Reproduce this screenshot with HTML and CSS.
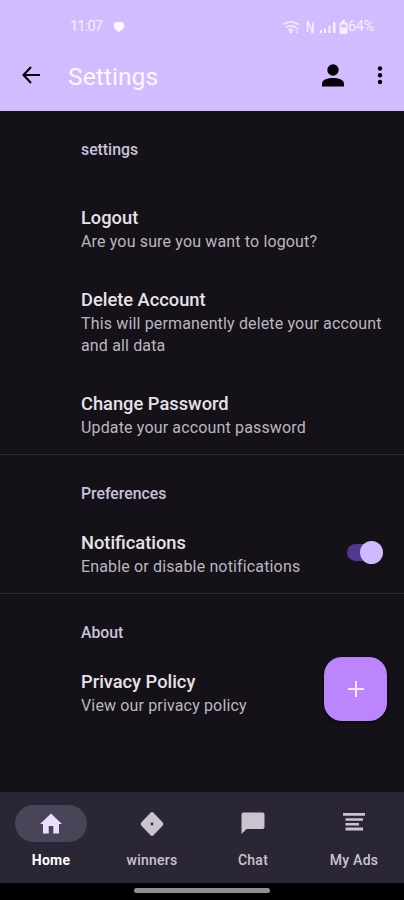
FILE: index.html
```
<!DOCTYPE html>
<html lang="en">
<head>
<meta charset="utf-8">
<title>Settings</title>
<link rel="stylesheet" href="styles.css">
</head>
<body>
<div class="screen">
  <header class="header">
    <div class="status">
      <span class="time">11:07</span>
      <svg class="bubble" width="12" height="12" viewBox="0 0 12 12"><path d="M3.500 1h5a3 3 0 0 1 2.800 3.500c0 2.500-1.500 4.500-4 5.500L5.500 11.300 4.500 10C2 9 .7 7 .7 4.500A3 3 0 0 1 3.500 1z"/></svg>
      <span class="spacer"></span>
      <svg class="signals" width="66" height="18" viewBox="0 0 66 18">
        <g fill="none" stroke="currentColor" stroke-width="1.700">
          <path d="M.5 6.500Q8 1 15.500 6.500M3 9.500Q8 6 13 9.500M5.500 12.500Q8 10.300 10 12.500"/>
          <path d="M24.500 14V4.500l5.500 9V4.500M23.500 4.500h3M27.500 14h3" stroke-width="1.500"/>
        </g>
        <circle cx="8" cy="14" r="1.300"/><path d="M13 10h2v2h-2zM13 13h2v2h-2z" opacity=".7"/>
        <path d="M37 12h2v3h-2zM41 10.500h2v4.500h-2zM45.500 8h2v7h-2zM50 4h2.500v11H50z"/>
        <path d="M59 2h3v2.500h2.500v11.500h-8V4.500H59zM58 6.500V9.500h5V6.500z" fill-rule="evenodd"/>
      </svg>
      <span class="percent">64%</span>
    </div>
    <div class="toolbar">
      <svg class="back" width="20" height="20" viewBox="0 0 20 20"><path d="M19 9H2.500M10 1L2.500 9l7.500 8" fill="none" stroke="currentColor" stroke-width="2.100"/></svg>
      <h1>Settings</h1>
      <svg class="person" width="24" height="24" viewBox="0 0 24 24"><circle cx="12" cy="6" r="5.700"/><path d="M1 22.500v-3c0-3.800 6-5.500 11-5.500s11 1.700 11 5.500v3z"/></svg>
      <svg class="more" width="6" height="20" viewBox="0 0 6 20"><circle cx="3" cy="2.500" r="2.200"/><circle cx="3" cy="9.300" r="2.200"/><circle cx="3" cy="16" r="2.200"/></svg>
    </div>
  </header>

  <main class="content">
    <section class="group first">
      <h2>settings</h2>
      <div class="item"><h3>Logout</h3><p>Are you sure you want to logout?</p></div>
      <div class="item"><h3>Delete Account</h3><p>This will permanently delete your account and all data</p></div>
      <div class="item"><h3>Change Password</h3><p>Update your account password</p></div>
    </section>
    <section class="group">
      <h2>Preferences</h2>
      <div class="item with-switch">
        <div><h3>Notifications</h3><p>Enable or disable notifications</p></div>
        <span class="switch"><span class="thumb"></span></span>
      </div>
    </section>
    <section class="group">
      <h2>About</h2>
      <div class="item"><h3>Privacy Policy</h3><p>View our privacy policy</p></div>
    </section>
    <button class="fab" aria-label="Add"><svg width="18" height="18" viewBox="0 0 18 18"><path d="M9 1v16M1 9h16" fill="none" stroke="currentColor" stroke-width="2"/></svg></button>
  </main>

  <nav class="nav">
    <a class="tab active"><span class="pill"><svg width="24" height="24" viewBox="0 0 24 24"><path d="M12 1.500L1 12h3v9.500h5.700V14h4.600v7.500H20V12h3z"/></svg></span><span class="label">Home</span></a>
    <a class="tab"><span class="pill"><svg width="26" height="26" viewBox="0 0 26 26"><path fill-rule="evenodd" d="M11.500 1.700q1.500-1.200 3 0l9.300 9.800q1.200 1.500 0 3l-9.300 9.800q-1.500 1.200-3 0l-9.300-9.800q-1.200-1.500 0-3zM13 11.600a1.400 1.400 0 1 0 0 2.800 1.400 1.400 0 0 0 0-2.800z"/></svg></span><span class="label">winners</span></a>
    <a class="tab"><span class="pill"><svg width="24" height="24" viewBox="0 0 24 24"><path d="M2.500 .5h19q2 0 2 2v12.500q0 2-2 2H5.500L.5 22V2.500q0-2 2-2z"/></svg></span><span class="label">Chat</span></a>
    <a class="tab"><span class="pill"><svg width="24" height="24" viewBox="0 0 24 24"><path d="M1 1h22v2.800H1zM3.500 6.300h17.500v2.500H3.500zM3.500 11h13.500v2.500H3.500zM3.500 15.500h17.500V18.500H3.500z"/></svg></span><span class="label">My Ads</span></a>
  </nav>
  <footer class="gesture"><span class="handle"></span></footer>
</div>
</body>
</html>
```
FILE: styles.css
```
* { box-sizing: border-box; }
body, h1, h2, h3, p { margin: 0; }
body { background: #141118; font-family: Roboto, "Liberation Sans", sans-serif; }
svg { display: block; flex: none; fill: currentColor; }

.screen { display: flex; flex-direction: column; width: 404px; height: 900px; overflow: hidden; }

.header { flex: none; height: 111px; background: #d1bcff; }
.status { display: flex; align-items: center; height: 36px; padding: 17px 30px 0 70px; color: #f7eeff; }
.time { font-size: 14.500px; line-height: 18px; width: 43px; letter-spacing: -0.800px; }
.bubble { color: #fff7ff; }
.spacer { flex: 1; }
.signals { margin-right: -1px; }
.percent { font-size: 14.500px; line-height: 18px; letter-spacing: -0.300px; }
.toolbar { display: flex; align-items: center; height: 79px; padding: 0 21px 0 21px; color: #050208; }
.toolbar h1 { flex: 1; margin: 3px 0 0 27px; color: #fff7ff; font-size: 24.700px; line-height: 30px; font-weight: 400; }
.more { margin-left: 32px; }

.content { position: relative; flex: 1; }
.group { border-bottom: 1px solid #2d2a32; height: 139px; }
.group.first { height: 344px; }
.group:nth-of-type(3) { border-bottom: 0; }
.group h2 { height: 58px; padding: 28px 0 0 81px; color: #cbc2db; font-size: 15.800px; line-height: 22px; font-weight: 500; }
.group.first h2 { height: 77px; padding-top: 28px; }
.item { padding: 18px 18px 18px 81px; }
.item h3 { color: #e8e1e9; font-size: 18.300px; line-height: 24px; font-weight: 500; }
.item p { position: relative; top: 1px; color: #bcb6bf; font-size: 16px; line-height: 22px; letter-spacing: 0.150px; }
.with-switch { display: flex; align-items: center; justify-content: space-between; padding-right: 21px; }
.switch { display: flex; align-items: center; justify-content: flex-end; width: 36px; height: 17px; margin-bottom: 3px; border-radius: 9px; background: #51378e; }
.thumb { flex: none; width: 23px; height: 23px; border-radius: 50%; background: #cfbaff; }
.fab { position: absolute; top: 546px; right: 17px; display: flex; align-items: center; justify-content: center; width: 63px; height: 64px; padding: 0; border: 0; border-radius: 18px; background: #bb86fc; color: #f5e7ff; box-shadow: 0 1px 3px #08050c; }

.nav { flex: none; display: grid; grid-template-columns: repeat(4, 1fr); height: 91px; background: #2b2635; color: #cbc4d0; }
.tab { display: flex; flex-direction: column; align-items: center; padding: 13px 0 0 1px; }
.pill { display: flex; align-items: center; justify-content: center; width: 72px; height: 37px; border-radius: 19px; }
.active .pill { background: #4a4458; color: #eadfff; }
.label { margin-top: 9px; font-size: 14px; line-height: 18px; font-weight: 500; letter-spacing: 0.250px; }
.active .label { color: #fff; font-weight: 700; }
.gesture { flex: none; height: 17px; padding-top: 5px; background: #000; }
.handle { display: block; width: 136px; height: 5px; margin: 0 auto; border-radius: 3px; background: #92918f; }
```
